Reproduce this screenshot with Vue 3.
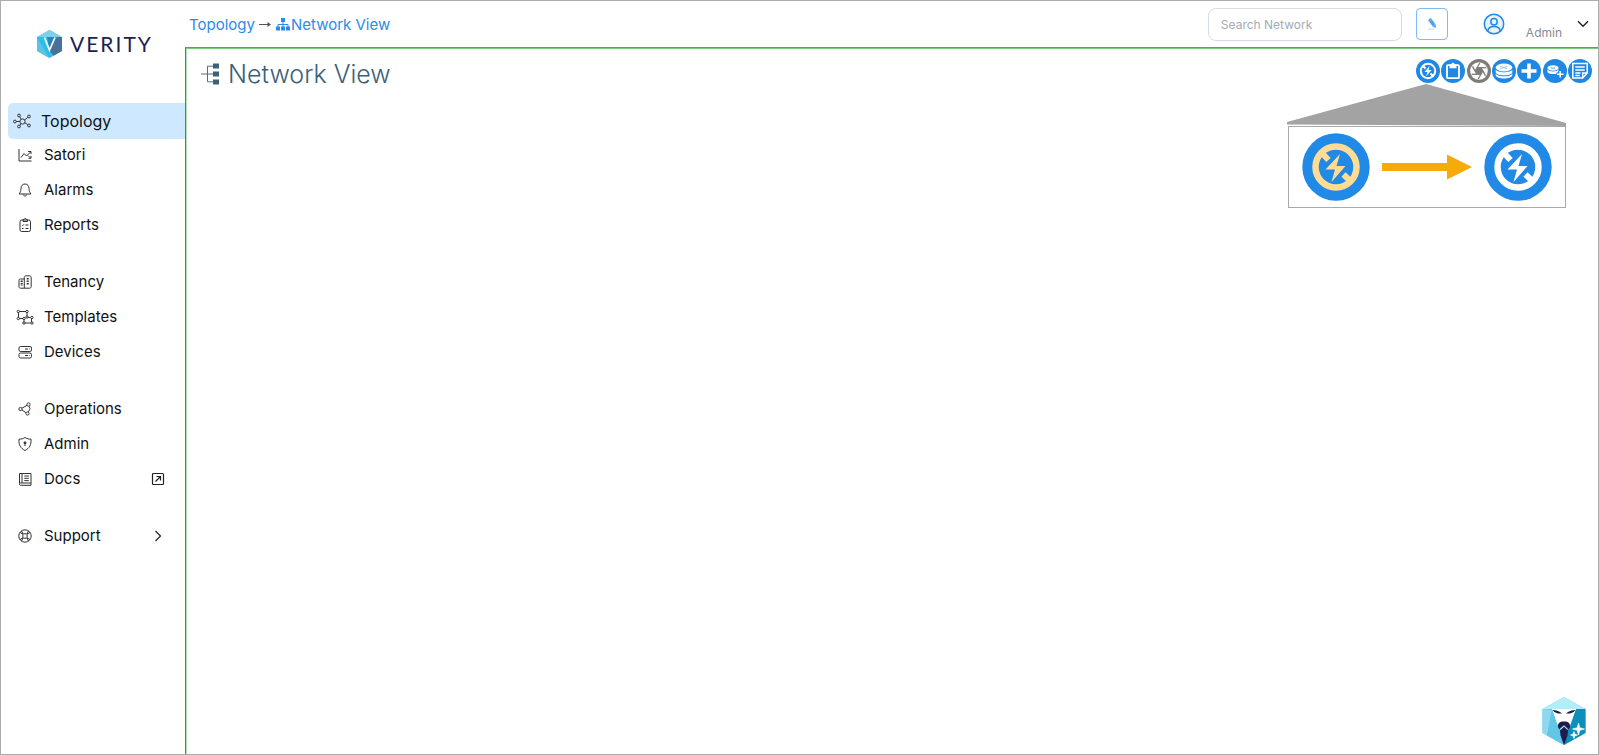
<script setup>
import { ref } from 'vue'

const search = ref('')

const groups = [
  [
    { label: 'Topology', icon: 'topology', active: true },
    { label: 'Satori', icon: 'chart' },
    { label: 'Alarms', icon: 'bell' },
    { label: 'Reports', icon: 'clipboard' },
  ],
  [
    { label: 'Tenancy', icon: 'buildings' },
    { label: 'Templates', icon: 'templates' },
    { label: 'Devices', icon: 'devices' },
  ],
  [
    { label: 'Operations', icon: 'operations' },
    { label: 'Admin', icon: 'shield' },
    { label: 'Docs', icon: 'docs', trail: 'external' },
  ],
  [{ label: 'Support', icon: 'support', trail: 'chevron' }],
]

const tools = [
  { id: 'power', label: 'Toggle power view' },
  { id: 'paste', label: 'Clipboard' },
  { id: 'aperture', label: 'Snapshot', muted: true },
  { id: 'stack', label: 'Switches' },
  { id: 'plus', label: 'Add' },
  { id: 'addswitch', label: 'Add switch' },
  { id: 'note', label: 'Notes' },
]
const blades = [0, 60, 120, 180, 240, 300]
</script>

<template>
  <div class="app">
    <aside class="sidebar">
      <a class="brand" href="#" aria-label="Verity home">
        <svg class="brand-mark" viewBox="0 0 25 28" aria-hidden="true">
          <path d="M12.5 0 25 7v14l-12.500 7L0 21V7z" fill="#35bfe8" />
          <path d="M12.500 0 25 7l-5 0-7.500 14L5 7H0z" fill="#7fd0e6" />
          <path d="M0 7 12.500 28 0 21z" fill="#5cc4e2" />
          <path d="M5 7h5l4 14-1.500 7L0 7z" fill="#2cbdea" />
          <path d="M10 7h10l-7.500 14z" fill="#2a86b8" />
          <path d="M20 7h5v14l-8.500 4.800L12.500 20z" fill="#4a7199" />
          <path d="M7.500 7.500 12.500 20 18 7.500" fill="none" stroke="#fff" stroke-width="1.700" />
        </svg>
        <span class="brand-name">VERITY</span>
      </a>

      <nav class="nav" aria-label="Main">
        <ul v-for="(group, g) in groups" :key="g" class="nav-group">
          <li v-for="item in group" :key="item.label">
            <a href="#" class="nav-item" :class="{ active: item.active }">
              <svg class="nav-icon" viewBox="0 0 18 18" aria-hidden="true">
                <g v-if="item.icon === 'topology'">
                  <circle cx="9.500" cy="9.500" r="2.600" />
                  <circle cx="6" cy="3.500" r="1.400" />
                  <circle cx="1.900" cy="9.500" r="1.400" />
                  <circle cx="6" cy="14.500" r="1.400" />
                  <circle cx="16" cy="4.500" r="1.400" />
                  <circle cx="16" cy="13.500" r="1.400" />
                  <path d="M6.900 9.500H3.300M8.200 7.200 6.700 4.700M8 11.700l-1.200 1.600M11.700 8l3-2.600M11.800 10.700l2.900 2" />
                </g>
                <g v-else-if="item.icon === 'chart'">
                  <path d="M3 3v12h12.500M5 11.500l3-4 2.500 2.500L14.500 6M12 5.500h3V8M12 9.500l2.500 2.500M15 9.800v2.500h-2.500" />
                </g>
                <g v-else-if="item.icon === 'bell'">
                  <path d="M9 3c-2.600 0-4 2-4 4.500 0 3-1.200 4-1.800 5.500h11.600C14.200 11.500 13 10.500 13 7.500 13 5 11.600 3 9 3zM7.300 13.500c.2 2 3.200 2 3.400 0" />
                </g>
                <g v-else-if="item.icon === 'clipboard'">
                  <rect x="4" y="4" width="10.500" height="11.500" rx="1.800" />
                  <path d="M7 5.500V3.500h1C8.500 2 10 2 10.500 3.500h1v2zM6 9l.7.700L8 8.300M9.500 9h3M6 12.500h1.500M9.500 12.500h3" />
                </g>
                <g v-else-if="item.icon === 'buildings'">
                  <path d="M8.300 15.200H4.500c-1 0-1.500-.5-1.500-1.500V7.500C3 6.500 3.500 6 4.500 6h3.800M8.300 15.200V4.500c0-1 .7-1.700 1.700-1.700h3.500c1 0 1.700.7 1.700 1.700v9c0 1-.7 1.700-1.700 1.700z" />
                  <path class="dots" d="M5.700 7.500v5.500M11.700 5v7.500" />
                </g>
                <g v-else-if="item.icon === 'templates'">
                  <path d="M2.500 4.500v5M3.500 3.500h6.500M11 4.500v3.500M3.500 10.500H7M8 11.500V14M9 15h5.500M15.500 14v-3M14.500 9.500H12" />
                  <circle cx="2.300" cy="3.500" r="1.200" /><circle cx="11" cy="3.500" r="1.200" />
                  <circle cx="2.300" cy="10.500" r="1.200" /><circle cx="8" cy="10.500" r="1.200" />
                  <circle cx="11" cy="9" r="1.200" /><circle cx="15.900" cy="9.500" r="1.200" />
                  <circle cx="8" cy="15" r="1.200" /><circle cx="15.900" cy="15" r="1.200" />
                </g>
                <g v-else-if="item.icon === 'devices'">
                  <rect x="3" y="3.500" width="12.500" height="5" rx="1.600" />
                  <rect x="3" y="10" width="12.500" height="5" rx="1.600" />
                  <path d="M9 6h3M13.300 6h.6M9 12.500h3M13.300 12.500h.6" />
                </g>
                <g v-else-if="item.icon === 'operations'">
                  <circle cx="4.500" cy="9" r="1.600" />
                  <circle cx="12.500" cy="4.500" r="1.600" />
                  <circle cx="11.500" cy="13.500" r="1.600" />
                  <path d="M6 8.200 11 5.300M6 10l4 2.700M13 6.200 14 8.500c-.3 1.500-1 2.500-1.800 3.500" />
                </g>
                <g v-else-if="item.icon === 'shield'">
                  <path d="M9 2.500c2 1.300 4 1.700 6 1.700.4 5.800-1.500 9-6 11.300C4.500 13.200 2.600 10 3 4.200c2 0 4-.4 6-1.700z" />
                  <circle cx="9" cy="7.800" r="1" fill="currentColor" />
                  <path d="M9 8v3" />
                </g>
                <g v-else-if="item.icon === 'docs'">
                  <path d="M3.500 13.500V3.500h11.500V13H4.500c-1.300 0-1.300 2.300 0 2.300H15V13M6 3.500V13M8.300 6h4.500M8.300 8.300h4.500M8.300 10.600h4.500" />
                </g>
                <g v-else>
                  <circle cx="9" cy="9" r="6.200" />
                  <rect x="6.800" y="6.800" width="4.400" height="4.400" rx="1" />
                  <path d="M3.800 5.500 7 7M5.500 3.800 7 7M14.200 5.500 11 7M12.500 3.800 11 7M3.800 12.500 7 11M5.500 14.200 7 11M14.200 12.500 11 11M12.500 14.200 11 11" />
                </g>
              </svg>
              <span class="nav-label">{{ item.label }}</span>
              <svg v-if="item.trail === 'external'" class="trail" viewBox="0 0 14 14" aria-hidden="true">
                <rect x="1.500" y="1.500" width="11" height="11" rx="1" />
                <path d="M4.500 9.500l5-5M5.500 4.500h4v4" />
              </svg>
              <svg v-if="item.trail === 'chevron'" class="trail" viewBox="0 0 14 14" aria-hidden="true">
                <path d="M4.500 2l5 5-5 5" />
              </svg>
            </a>
          </li>
        </ul>
      </nav>
    </aside>

    <div class="content">
      <header class="topbar">
        <nav class="crumbs" aria-label="Breadcrumb">
          <a href="#">Topology</a>
          <svg class="crumb-arrow" viewBox="0 0 14 10" aria-hidden="true">
            <path d="M1 5.500h10" stroke="#555" /><path d="M9.500 3 13 5.500 9.500 8z" fill="#555" />
          </svg>
          <a href="#" class="crumb-current">
            <svg class="sitemap" viewBox="0 0 14 14" aria-hidden="true">
              <path d="M5 1h4v4H5zM0 9.500h4v4H0zM5 9.500h4v4H5zM10 9.500h4v4h-4z" fill="currentColor" />
              <path d="M7 5v5M2 10V7.500h10V10" fill="none" stroke="currentColor" />
            </svg>Network View</a>
        </nav>
        <div class="actions">
          <input v-model="search" class="search" type="search" aria-label="Search Network" placeholder="Search Network" />
          <button class="edit" type="button" aria-label="Edit search">
            <svg viewBox="0 0 12 14" aria-hidden="true">
              <path d="M2 3 5 1l4.500 6.500.5 3.500-3.300-1.500z" fill="#4a9fee" />
              <path d="M2.500 4.800 5.800 2.600M6.300 9.200l3-2" stroke="#8cc4f5" stroke-width=".7" />
              <path d="M2 12h6" stroke="#b9dcf9" />
            </svg>
          </button>
          <button class="user" type="button">
            <svg class="avatar" viewBox="0 0 22 22" aria-hidden="true">
              <circle cx="11" cy="11" r="9.700" fill="#e8f3fe" />
              <circle cx="11" cy="8.800" r="3.200" />
              <path d="M4.800 18c.7-6 11.700-6 12.400 0" />
            </svg>
            <span class="user-name">Admin</span>
            <svg class="caret" viewBox="0 0 12 8" aria-hidden="true"><path d="M1 1.200 6 6.200l5-5" /></svg>
          </button>
        </div>
      </header>

      <main class="stage">
        <div class="stage-head">
          <h1>
            <svg class="tree" viewBox="0 0 20 22" aria-hidden="true">
              <path d="M0 11h12M12 3.200H6.500v15.600H12" fill="none" stroke="#4d6f86" />
              <path d="M12 0.500h6v5h-6zM12 8.500h6v5h-6zM12 16.500h6v5h-6z" fill="#3c6078" />
            </svg>
            Network View
          </h1>
          <div class="toolbar">
            <button v-for="tool in tools" :key="tool.id" type="button" class="tool" :class="{ muted: tool.muted }" :aria-label="tool.label">
              <svg viewBox="0 0 24 24" aria-hidden="true">
                <g v-if="tool.id === 'power'">
                  <circle cx="12" cy="12" r="7.200" class="line" stroke-width="2" />
                  <path d="M7 7l2.500 2.500M14.500 14.500 17 17" class="line" stroke-width="2" />
                  <path d="M13.500 7 8.500 13h2.800l-1 4.200 5.200-6.200h-2.900z" class="solid" />
                </g>
                <g v-else-if="tool.id === 'paste'">
                  <rect x="6" y="6.200" width="12" height="13" rx="1" class="line" stroke-width="1.800" />
                  <path d="M8.500 5.500h1.700C10.500 3.300 13.500 3.300 13.800 5.500h1.700v3.800h-7z" class="solid" />
                </g>
                <g v-else-if="tool.id === 'aperture'">
                  <circle cx="12" cy="12" r="8.800" class="solid" />
                  <path d="M10.100 8.700h3.800l1.900 3.300-1.900 3.300h-3.800L8.200 12z" fill="#7f7b78" />
                  <path v-for="b in blades" :key="b" d="M9.800 8.700h9.500" :transform="`rotate(${b} 12 12)`" stroke="#7f7b78" stroke-width="1.300" />
                </g>
                <g v-else-if="tool.id === 'stack'">
                  <ellipse cx="12" cy="8.500" rx="8.300" ry="4" class="solid" />
                  <path d="M3.700 10.500c1.600 3.600 15 3.600 16.600 0V13.500c-1.600 3.800-15 3.800-16.600 0zM3.700 14.500c1.600 3.800 15 3.800 16.600 0V16.500c-1.600 4-15 4-16.600 0z" class="solid" />
                  <path d="M8 7.200l7 2.500M15.500 7l-7.500 3" stroke="#7ab9f2" stroke-width=".8" />
                </g>
                <g v-else-if="tool.id === 'plus'">
                  <path d="M12 4.500v15M4.500 12h15" class="line" stroke-width="3.600" />
                </g>
                <g v-else-if="tool.id === 'addswitch'">
                  <ellipse cx="10" cy="9" rx="5.600" ry="2.700" class="solid" />
                  <path d="M4.400 10.500c1.200 2.600 10 2.600 11.200 0v2.500c-1.200 2.800-10 2.800-11.200 0z" class="solid" />
                  <path d="M7.500 8.200l5 1.700M12.500 8l-5 2" stroke="#7ab9f2" stroke-width=".7" />
                  <path d="M17.200 11.500v7M13.700 15h7" stroke="#1f88e5" stroke-width="3.500" />
                  <path d="M17.200 12v6.500M14 15.200h6.500" class="line" stroke-width="1.500" />
                </g>
                <g v-else>
                  <path d="M4.800 4.500h14.400v9.500l-4.500 5H4.800zM19 14h-4.300v5" class="line" stroke-width="1.500" />
                  <path d="M7.300 8h9.400M7.300 11h9.400M7.300 14h5.200M7.300 16.500h4.500" class="line" stroke-width="1.300" />
                </g>
              </svg>
            </button>
          </div>
        </div>

        <div class="callout">
          <svg class="callout-roof" viewBox="0 0 279 42" preserveAspectRatio="none" aria-hidden="true">
            <path d="M139 0 279 39v3L0 40.500v-2.500z" fill="#a3a3a3" />
          </svg>
          <div class="callout-box">
            <template v-for="tone in ['warm', 'plain']" :key="tone">
              <svg class="big-power" :class="tone" viewBox="0 0 68 68" aria-hidden="true">
                <circle cx="34" cy="34" r="33.700" fill="#2189e6" />
                <circle cx="34" cy="34" r="20.500" fill="none" stroke="currentColor" stroke-width="6.500" />
                <path d="M19 19l7.500 8M41.500 41.500l9 8.500" fill="none" stroke="currentColor" stroke-width="6" />
                <path d="M38 21 23.500 36.500H33L29.500 49 43.500 33H34.500z" fill="currentColor" />
              </svg>
              <svg v-if="tone === 'warm'" class="flow" viewBox="0 0 90 26" aria-hidden="true">
                <path d="M0 9h65V.5L90 13 65 25.500V17H0z" fill="#f8aa0a" />
              </svg>
            </template>
          </div>
        </div>

        <button class="assistant" type="button" aria-label="Open assistant">
          <svg viewBox="0 0 44 48" aria-hidden="true">
            <path d="M22 0 43.500 12v24L22 48 .5 36V12z" fill="#5cc4e8" />
            <path d="M22 0 43.500 12H.5z" fill="#b5ecf8" />
            <path d="M.5 12 10 13 5 38.500.5 36z" fill="#8fd9ee" />
            <path d="M10 13 20 47 5 38.500z" fill="#62c6e6" />
            <path d="M43.500 12v24L22 48V30L34 12z" fill="#0d8fba" />
            <path d="M10 12h24l-6 17-3-4h-6l-3 4z" fill="#fff" />
            <path d="M10.500 13c4 0 7 1.500 9.500 3.500-4 .5-7-.5-9.500-3.500zM33.500 13c-4 0-7 1.500-9.500 3.500 4 .5 7-.5 9.500-3.500z" fill="#1d1c4d" />
            <path d="M22 24.500c4.500 0 6.500 2 6 5.500l-1.500 2.500L25.500 31 22 28.500 18.500 31l-1 1.500L16 30c-.5-3.500 1.500-5.500 6-5.500z" fill="#1d1c4d" />
            <path d="M18.500 32 22 28.500l3.500 3.500-1 3h-5z" fill="#fff" />
            <path d="M22 29.500 26 33.500l-.5 5L22 48l-3.500-9.500-.5-5z" fill="#1d1c4d" />
            <path d="M36.500 26l1.300 4.700 4.700 1.300-4.700 1.300L36.500 38l-1.300-4.700-4.700-1.300 4.700-1.300zM32 34.500l.9 2.600 2.600.9-2.600.9-.9 2.600-.9-2.600-2.600-.9 2.600-.9z" fill="#fff" stroke="#fff" stroke-width=".6" />
          </svg>
        </button>
      </main>
    </div>
  </div>
</template>

<style>
body { background: #fff; }
</style>

<style scoped>
* { box-sizing: border-box; }
.app {
  display: grid;
  grid-template-columns: 184px minmax(0, 1fr);
  min-height: 100vh;
  border: 1px solid #acacac;
  font-family: Inter, "Liberation Sans", sans-serif;
  color: #111;
}
a { color: inherit; text-decoration: none; }
button { padding: 0; border: 0; background: none; font: inherit; cursor: pointer; }
svg { display: block; flex: none; }

.brand { display: flex; align-items: center; gap: 8px; height: 85px; padding-left: 36px; }
.brand-mark { width: 25px; height: 28px; }
.brand-name { font-family: Lato, sans-serif; font-size: 21px; letter-spacing: 2px; color: #211f54; }

.nav { padding: 17px 0 0 7px; }
.nav-group { list-style: none; margin: 0 0 22px; padding: 0; }
.nav-item { display: flex; align-items: center; gap: 10px; height: 35px; padding: 0 20px 0 8px; font-size: 15px; }
.nav-item.active { height: 36px; margin-bottom: -2px; padding-left: 5px; border-radius: 5px 0 0 5px; background: #cee9ff; font-size: 16px; }
.nav-icon { width: 18px; height: 18px; fill: none; stroke: #333; color: #333; stroke-width: 1; stroke-linejoin: round; }
.nav-icon .dots { stroke-width: 2; stroke-dasharray: 1.500 1; }
.trail { width: 14px; height: 14px; margin-left: auto; fill: none; stroke: #222; stroke-width: 1.200; }

.content { display: flex; flex-direction: column; min-width: 0; }
.topbar { display: flex; align-items: center; justify-content: space-between; height: 46px; padding: 0 9px 0 4px; }
.crumbs { display: flex; align-items: center; font-size: 15px; color: #2b8be9; }
.crumb-arrow { width: 14px; height: 10px; margin: 0 4px 0 3px; }
.crumb-current { display: flex; align-items: center; }
.sitemap { width: 14px; height: 14px; margin-right: 1px; }
.actions { display: flex; align-items: center; }
.search {
  width: 194px; height: 33px; margin: 0 14px 0 0; padding: 0 12px;
  border: 1px solid #d5dce2; border-radius: 8px; outline: 0; background: #fff;
  font: 12px Inter, "Liberation Sans", sans-serif; color: #555;
}
.search::placeholder { color: #a3abb5; opacity: 1; }
.edit { display: grid; place-items: center; width: 32px; height: 32px; border: 1px solid #7dbcf5; border-radius: 4px; }
.edit svg { width: 12px; height: 14px; }
.user { display: flex; align-items: center; margin-left: 35px; }
.avatar { width: 22px; height: 22px; fill: none; stroke: #2189e6; stroke-width: 1.500; }
.user-name { margin-left: 21px; padding-top: 18px; font-size: 12px; line-height: 16px; color: #858b92; }
.caret { width: 12px; height: 8px; margin-left: 15px; fill: none; stroke: #222; stroke-width: 1.400; }

.stage {
  position: relative;
  flex: 1;
  border-top: 1px solid #5f9e61;
  border-left: 1px solid #3d9443;
  box-shadow: inset 0 1px #7cc880, inset 1px 0 #b5e3b5;
}
.stage-head { display: flex; justify-content: space-between; align-items: flex-start; padding: 10px 6px 0 15px; }
h1 { display: flex; align-items: center; gap: 7px; margin: 0; font-size: 25px; line-height: 32px; font-weight: 300; color: #3c6078; }
.tree { width: 20px; height: 22px; }
.toolbar { display: flex; justify-content: space-between; width: 176px; padding-top: 1px; }
.tool { width: 24px; height: 24px; border-radius: 50%; background: #1f88e5; }
.tool.muted { background: #7f7b78; }
.tool svg { width: 24px; height: 24px; fill: none; }
.tool .line { stroke: #fff; fill: none; }
.tool .solid { fill: #fff; }

.callout { position: absolute; top: 36px; right: 32px; width: 279px; }
.callout-roof { width: 100%; height: 42px; }
.callout-box { display: flex; align-items: center; justify-content: space-between; height: 82px; margin-left: 1px; padding: 0 13px; border: 1px solid #a9a9a9; background: #fff; }
.big-power { width: 68px; height: 68px; }
.big-power.warm { color: #ffdc94; }
.big-power.plain { color: #fff; }
.flow { width: 90px; height: 26px; }

.assistant { position: absolute; right: 12px; bottom: 9px; }
.assistant svg { width: 44px; height: 48px; }
</style>
